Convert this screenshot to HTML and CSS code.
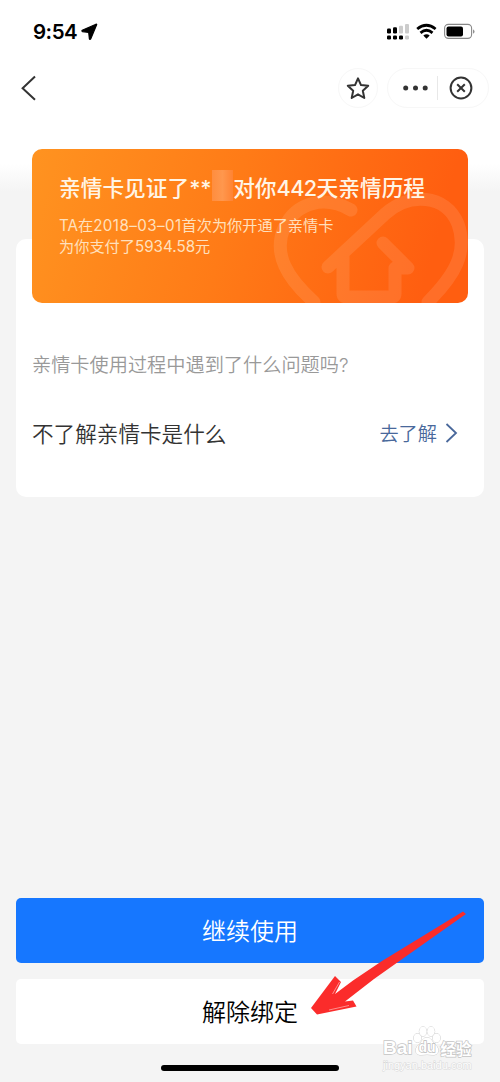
FILE: index.html
```html
<!DOCTYPE html>
<html lang="zh-CN">
<head>
<meta charset="utf-8">
<title>亲情卡</title>
<link rel="stylesheet" href="styles.css">
</head>
<body>
<div class="screen">
  <header class="status">
    <div class="clock">9:54
      <svg class="loc" width="17" height="17" viewBox="0 0 17 17"><path d="M15 1.200 1.300 7.300q-1 .8.2 1.300l6.200.9.700 6.400q.5 1 1.300 0L15.700 1.700q.1-.6-.7-.5Z"/></svg>
    </div>
    <svg class="indicators" width="92" height="20" viewBox="0 0 92 20">
      <g class="on"><rect x="1" y="8.500" width="4" height="5" rx="1.2"/><rect x="7" y="7.2" width="4" height="6.3" rx="1.2"/><rect x="1" y="15.4" width="4" height="4" rx="1.2"/><rect x="7" y="15.4" width="4" height="4" rx="1.2"/><rect x="13" y="15.4" width="4" height="4" rx="1.2"/></g>
      <g class="off"><rect x="13" y="5.800" width="4" height="7.700" rx="1"/><rect x="19" y="4" width="4" height="9.500" rx="1"/><rect x="19" y="15.4" width="4" height="4" rx="1.2"/></g>
      <g class="wifi"><path d="M31.2 9q9.200-7.600 18.400 0"/><path d="M34.5 12.8q6-5 12 0"/><path class="dot" d="M37.3 15.6q3.300-2.600 6.400 0l-3.200 3.200Z"/></g>
      <rect class="shell" x="58.6" y="4.4" width="27" height="14" rx="3.8"/><rect class="on" x="60.5" y="6.4" width="16.5" height="10" rx="2"/><path class="cap" d="M87.2 9.2q2.6 2.300 0 4.600Z"/>
    </svg>
  </header>
  <nav class="nav">
    <svg class="back" width="20" height="28" viewBox="0 0 20 28"><path d="M15 2.500 2.600 14.300l12.400 11.500"/></svg>
    <div class="tools">
      <span class="round"><svg width="26" height="26" viewBox="0 0 26 26"><path d="m13 3.300 3 6.800 7.200.7-5.400 5 1.500 7.200-6.300-3.700-6.300 3.700 1.500-7.200-5.400-5 7.200-.7Z"/></svg></span>
      <span class="capsule">
        <svg class="more" width="26" height="6" viewBox="0 0 26 6"><circle cx="2.700" cy="3" r="2.500"/><circle cx="12.500" cy="3" r="2.500"/><circle cx="22.200" cy="3" r="2.500"/></svg>
        <i class="rule"></i>
        <svg class="close" width="26" height="26" viewBox="0 0 26 26"><circle cx="13" cy="13" r="10.400"/><path d="m9.200 9.200 7.600 7.600m0-7.600-7.600 7.600"/></svg>
      </span>
    </div>
  </nav>
  <main class="panel">
    <section class="card">
      <svg class="emblem" width="436" height="154" viewBox="32 149 436 154">
        <path d="M351 210C325 195 296 202 284 228c-11 26 3 50 30 74M328 267l57-53c24-22 61-20 73 10 10 28-3 51-30 78M383 243l25 25h-13v26q0 3-4 3h-44q-4 0-4-3v-37"/>
      </svg>
      <h1 class="title"><span>亲情卡见证了</span><span class="stars">**</span><i class="mask"></i><span>对你<b class="days">442</b>天亲情历程</span></h1>
      <p class="detail"><span>TA在<span class="date">2018–03–01</span>首次为你开通了亲情卡</span><br>为你支付了5934.58元</p>
    </section>
    <h2 class="question">亲情卡使用过程中遇到了什么问题吗?</h2>
    <div class="row">
      <span class="topic">不了解亲情卡是什么</span>
      <a class="link">去了解<svg width="14" height="20" viewBox="0 0 14 20"><path d="m1.500 1 9.500 9-9.500 9"/></svg></a>
    </div>
  </main>
  <footer class="actions">
    <button class="btn primary">继续使用</button>
    <button class="btn">解除绑定</button>
    <div class="home"></div>
  </footer>
  <svg class="arrow" width="160" height="110" viewBox="308 908 160 110">
    <path d="M463 911.500 466 914 398 962 374 979 345 1001.500 353 1000.500 356.500 1006.500 317 1014.500 311 1008 335 976 341 982 335 994 353 980.500 382 961Z"/>
    <path class="scratch" d="m339.500 982-7 12M349 1005.500l-20 4.500"/>
  </svg>
  <div class="watermark">
    <div class="brand"><span>Bai</span><svg width="28" height="32" viewBox="0 0 28 32"><ellipse cx="4.500" cy="12" rx="3.700" ry="4.300"/><ellipse cx="10" cy="5.500" rx="3.700" ry="4.700"/><ellipse cx="18" cy="5.500" rx="3.700" ry="4.700"/><ellipse cx="23.500" cy="12" rx="3.700" ry="4.300"/><path d="M14 11.500c4 0 5 4 8 7 6 5 3 11-2 10.500q-6-1-12 0c-5 .5-8-5.500-2-10.500 3-3 4-7 8-7Z"/><text x="14" y="25.500" text-anchor="middle">du</text></svg><span class="cn">经验</span></div>
    <div class="site">jingyan.baidu.com</div>
  </div>
</div>
</body>
</html>
```

FILE: styles.css
```css
* { box-sizing: border-box; }
body { margin: 0; font-family: Inter, "Noto Sans CJK SC", sans-serif; color: #333; }
h1, h2, p { margin: 0; font-weight: 400; }
.screen {
  position: relative;
  display: flex;
  flex-direction: column;
  width: 500px;
  height: 1082px;
  overflow: hidden;
  background: linear-gradient(#fff 0, #fff 164px, #f4f4f4 192px);
}
.status { display: flex; justify-content: space-between; height: 64px; padding: 20px 22px 0 33px; }
.clock { display: flex; align-items: center; gap: 4px; height: 23px; font-size: 20.5px; font-weight: 600; letter-spacing: -.5px; color: #000; }
.loc { stroke: #000; stroke-width: 1.2; }
.indicators .on { fill: #000; }
.indicators .off { fill: #ccc; }
.wifi path { fill: none; stroke: #000; stroke-width: 2.8; }
.wifi .dot { fill: #000; stroke: none; }
.shell { fill: none; stroke: #888; stroke-width: 1.1; }
.cap { fill: #777; }
.nav { display: flex; align-items: center; justify-content: space-between; height: 48px; padding: 0 11px 0 20px; }
.back path { fill: none; stroke: #333; stroke-width: 2; }
.tools { display: flex; gap: 9px; }
.round, .capsule { display: flex; align-items: center; height: 40px; border: 1px solid #f7f7f7; border-radius: 20px; background: #fff; }
.round { justify-content: center; width: 40px; }
.round path, .close { fill: none; stroke: #333; stroke-width: 2; stroke-linejoin: round; }
.close path { stroke-width: 2; }
.capsule { width: 102px; padding-left: 15px; }
.more { fill: #333; }
.rule { width: 1px; height: 24px; margin: 0 10px 0 8px; background: #e8e8e8; }
.panel { height: 258px; margin: 127px 16px 0; padding: 0 16px; border-radius: 10px; background: #fff; }
.card {
  position: relative;
  height: 154px;
  margin-top: -90px;
  padding: 27px 26px 0 27px;
  overflow: hidden;
  border-radius: 10px;
  background: linear-gradient(105deg, #ff9320 0%, #ff7b17 45%, #ff5e10 90%);
}
.emblem { position: absolute; inset: 0; }
.emblem path { fill: none; stroke: #fff; stroke-opacity: .1; stroke-width: 13; stroke-linecap: round; stroke-linejoin: round; }
.title { position: relative; display: flex; align-items: center; height: 24px; font-size: 21.7px; font-weight: 500; line-height: 24px; color: #fff5e6; white-space: nowrap; }
.stars { width: 23px; letter-spacing: -.2px; }
.mask { width: 21px; height: 31px; margin-top: -5px; background: linear-gradient(90deg, #ff9045, #ff9c57 50%, #ff8438); opacity: .85; }
.days { font-weight: 500; letter-spacing: -.6px; }
.detail { position: relative; margin-top: 15px; font-size: 15.2px; line-height: 21px; color: #ffe0bd; white-space: nowrap; }
.date { letter-spacing: .4px; }
.question { margin-top: 48px; font-size: 19.2px; font-family: Inter, "Noto Sans CJK SC DemiLight", "Noto Sans CJK SC", sans-serif; font-weight: 350; line-height: 28px; color: #999; }
.row { display: flex; align-items: center; justify-content: space-between; height: 32px; margin-top: 39px; padding-right: 9px; font-weight: 350; }
.topic { font-size: 21.6px; line-height: 30px; }
.link { display: flex; align-items: center; gap: 8px; margin-top: -2px; font-size: 19.2px; color: #49689b; }
.link path { fill: none; stroke: #49689b; stroke-width: 1.8; }
.actions { display: flex; flex-direction: column; gap: 16px; margin-top: auto; padding: 0 16px 11px; }
.btn { height: 65px; padding: 0 0 2px; border: 0; border-radius: 5px; background: #fff; color: #000; font: 350 24px/63px "Noto Sans CJK SC", sans-serif; }
.primary { background: #1677ff; color: #fff; }
.home { align-self: center; width: 178px; height: 6px; margin-top: 5px; border-radius: 3px; background: #000; }
.arrow { position: absolute; left: 308px; top: 908px; fill: #fb2c2b; }
.scratch { fill: none; stroke: #ffd0ce; stroke-width: .6; }
.watermark { position: absolute; left: 383px; top: 1026px; width: 92px; color: #fff; }
.brand { display: flex; align-items: center; height: 32px; font: 700 19px/20px "Liberation Sans", sans-serif; color: #fff; -webkit-text-stroke: 1.4px #c4c4c4; paint-order: stroke fill; }
.brand span { padding-top: 11px; }
.brand svg { flex: none; fill: #fff; stroke: #c9c9c9; stroke-width: .9; }
.brand text { font: 700 14px "Liberation Sans", sans-serif; fill: #fff; stroke: #bbb; stroke-width: 1.4; paint-order: stroke fill; -webkit-text-stroke: 1.4px #bbb; }
.brand .cn { font-family: "Noto Sans CJK SC", sans-serif; font-size: 15.5px; line-height: 18px; }
.site { margin-top: 1px; font: 11px/12px "Liberation Sans", sans-serif; color: #fff; -webkit-text-stroke: 1px #d8d8d8; paint-order: stroke fill; }
```
